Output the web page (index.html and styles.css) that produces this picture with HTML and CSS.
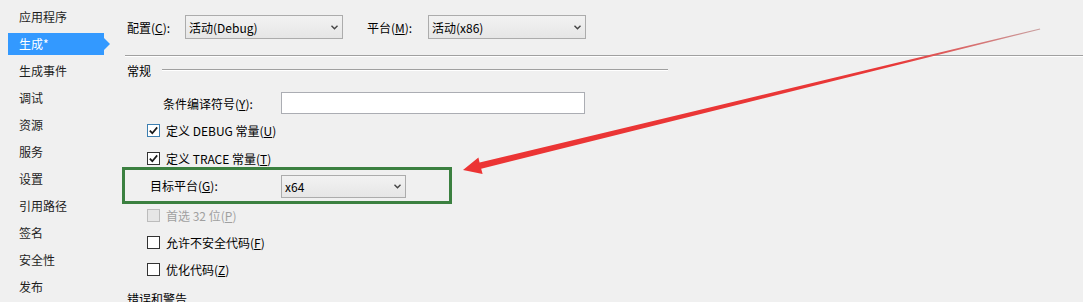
FILE: index.html
```html
<!DOCTYPE html>
<html lang="zh-CN">
<head>
<meta charset="utf-8">
<title>生成</title>
<link rel="stylesheet" href="styles.css">
</head>
<body>
<div class="page">
  <nav class="side">
    <div class="nav-item">应用程序</div>
    <div class="nav-item active">生成*</div>
    <div class="nav-item">生成事件</div>
    <div class="nav-item">调试</div>
    <div class="nav-item">资源</div>
    <div class="nav-item">服务</div>
    <div class="nav-item">设置</div>
    <div class="nav-item">引用路径</div>
    <div class="nav-item">签名</div>
    <div class="nav-item">安全性</div>
    <div class="nav-item">发布</div>
  </nav>
  <main class="main">
    <div class="topbar">
      <span class="lbl lbl-config">配置(<u>C</u>):</span>
      <div class="select sel-top"><span>活动(Debug)</span><svg class="chev" width="7" height="5" viewBox="0 0 7 5"><polyline points="0.5,0.8 3.5,3.8 6.5,0.8" fill="none" stroke="#444" stroke-width="1.4"/></svg></div>
      <span class="lbl lbl-plat">平台(<u>M</u>):</span>
      <div class="select sel-top"><span>活动(x86)</span><svg class="chev" width="7" height="5" viewBox="0 0 7 5"><polyline points="0.5,0.8 3.5,3.8 6.5,0.8" fill="none" stroke="#444" stroke-width="1.4"/></svg></div>
    </div>
    <div class="sep"></div>
    <div class="group-head"><span>常规</span><div class="group-line"></div></div>
    <div class="input-row"><span class="lbl lbl-sym">条件编译符号(<u>Y</u>):</span><div class="textbox"></div></div>
    <div class="check-row r-debug"><span class="cb cb-focus"><svg width="11" height="11" viewBox="0 0 11 11"><polyline points="1.8,5.6 4.3,8.2 9.2,2.4" fill="none" stroke="#1a1a1a" stroke-width="1.7"/></svg></span><span>定义 DEBUG 常量(<u>U</u>)</span></div>
    <div class="check-row r-trace"><span class="cb"><svg width="11" height="11" viewBox="0 0 11 11"><polyline points="1.8,5.6 4.3,8.2 9.2,2.4" fill="none" stroke="#1a1a1a" stroke-width="1.7"/></svg></span><span>定义 TRACE 常量(<u>T</u>)</span></div>
    <div class="target-row"><span class="lbl lbl-target">目标平台(<u>G</u>):</span><div class="select sel-target"><span>x64</span><svg class="chev" width="7" height="5" viewBox="0 0 7 5"><polyline points="0.5,0.8 3.5,3.8 6.5,0.8" fill="none" stroke="#444" stroke-width="1.4"/></svg></div></div>
    <div class="check-row r-pref disabled"><span class="cb"></span><span>首选 32 位(<u>P</u>)</span></div>
    <div class="check-row r-next"><span class="cb"></span><span>允许不安全代码(<u>F</u>)</span></div>
    <div class="check-row r-next"><span class="cb"></span><span>优化代码(<u>Z</u>)</span></div>
    <div class="err-head"><span>错误和警告</span></div>
  </main>
</div>
<svg class="arrow" width="1083" height="302" viewBox="0 0 1083 302">
  <defs>
    <linearGradient id="ag" x1="463" y1="170" x2="1040" y2="29" gradientUnits="userSpaceOnUse">
      <stop offset="0" stop-color="#ec3434"/>
      <stop offset="0.75" stop-color="#e83838"/>
      <stop offset="1" stop-color="#c9a0a0"/>
    </linearGradient>
  </defs>
  <polygon points="463,170 478.4,157.6 479.6,162.6 1040,28.6 1040.2,29.4 481.2,168.8 482.6,174" fill="url(#ag)"/>
</svg>
</body>
</html>
```

FILE: styles.css
```css
html, body {
  margin: 0;
  padding: 0;
}
body {
  width: 1083px;
  height: 302px;
  overflow: hidden;
  background: #f0f0f0;
  font-family: "Noto Sans CJK SC", "Noto Sans", sans-serif;
  font-size: 12px;
  color: #000;
  position: relative;
}
u { text-decoration: underline; text-underline-offset: 1px; }
.page {
  display: flex;
  height: 302px;
  overflow: hidden;
}
.side {
  width: 110px;
  flex: none;
  padding-top: 6px;
  display: flex;
  flex-direction: column;
  gap: 5px;
}
.nav-item {
  flex: none;
  height: 22px;
  line-height: 22px;
  margin-left: 8px;
  width: 96px;
  padding-left: 11px;
  box-sizing: border-box;
  color: #1e1e1e;
  position: relative;
}
.nav-item.active {
  background: #3399ff;
  color: #fff;
}
.nav-item.active::after {
  content: "";
  position: absolute;
  right: -6px;
  top: 5px;
  border-left: 6px solid #3399ff;
  border-top: 6px solid transparent;
  border-bottom: 6px solid transparent;
}
.main {
  flex: 1;
  margin-left: 15px;
  display: flex;
  flex-direction: column;
}
.main > * { flex: none; }
.lbl { flex: none; white-space: nowrap; }
.topbar {
  margin-top: 15px;
  height: 24px;
  display: flex;
  align-items: center;
  padding-left: 2px;
}
.lbl-config { width: 58px; }
.lbl-plat { width: 61px; margin-left: 24px; }
.select {
  box-sizing: border-box;
  border: 1px solid #acacac;
  background: linear-gradient(#f2f2f2, #e6e6e6);
  display: flex;
  align-items: center;
  justify-content: space-between;
  padding: 0 4px 0 3px;
}
.sel-top { width: 158px; height: 24px; }
.chev { flex: none; }
.sep {
  margin-top: 16px;
  border-top: 1px solid #a0a0a0;
  border-bottom: 1px solid #fff;
}
.group-head {
  margin-top: 6px;
  height: 14px;
  width: 541px;
  display: flex;
  align-items: center;
  padding-left: 2px;
}
.group-line {
  flex: 1;
  margin-left: 11px;
  border-top: 1px solid #a0a0a0;
  border-bottom: 1px solid #fff;
}
.input-row {
  margin-top: 15px;
  height: 22px;
  display: flex;
  align-items: center;
  padding-left: 38px;
}
.lbl-sym { width: 118px; }
.textbox {
  width: 304px;
  height: 22px;
  box-sizing: border-box;
  background: #fff;
  border: 1px solid #abadb3;
}
.check-row {
  height: 13px;
  display: flex;
  align-items: center;
  padding-left: 22px;
}
.r-debug { margin-top: 10px; }
.r-trace { margin-top: 15px; }
.r-pref { margin-top: 5px; }
.r-next { margin-top: 14px; }
.cb {
  width: 13px;
  height: 13px;
  box-sizing: border-box;
  border: 1px solid #333;
  background: #fff;
  margin-right: 6px;
  flex: none;
  display: flex;
  align-items: center;
  justify-content: center;
}
.cb-focus { border-color: #3c7fb1; }
.disabled { color: #a0a0a0; }
.disabled .cb { border-color: #bcbcbc; background: #e6e6e6; }
.target-row {
  margin-top: 2px;
  margin-left: -3px;
  width: 330px;
  height: 37px;
  box-sizing: border-box;
  border: 3px solid #3b8040;
  display: flex;
  align-items: center;
  padding-left: 25px;
}
.lbl-target { width: 131px; }
.sel-target { width: 125px; height: 23px; margin-top: 2px; }
.err-head {
  margin-top: 16px;
  height: 14px;
  line-height: 14px;
  padding-left: 2px;
}
.arrow {
  position: absolute;
  left: 0;
  top: 0;
  pointer-events: none;
}
```
